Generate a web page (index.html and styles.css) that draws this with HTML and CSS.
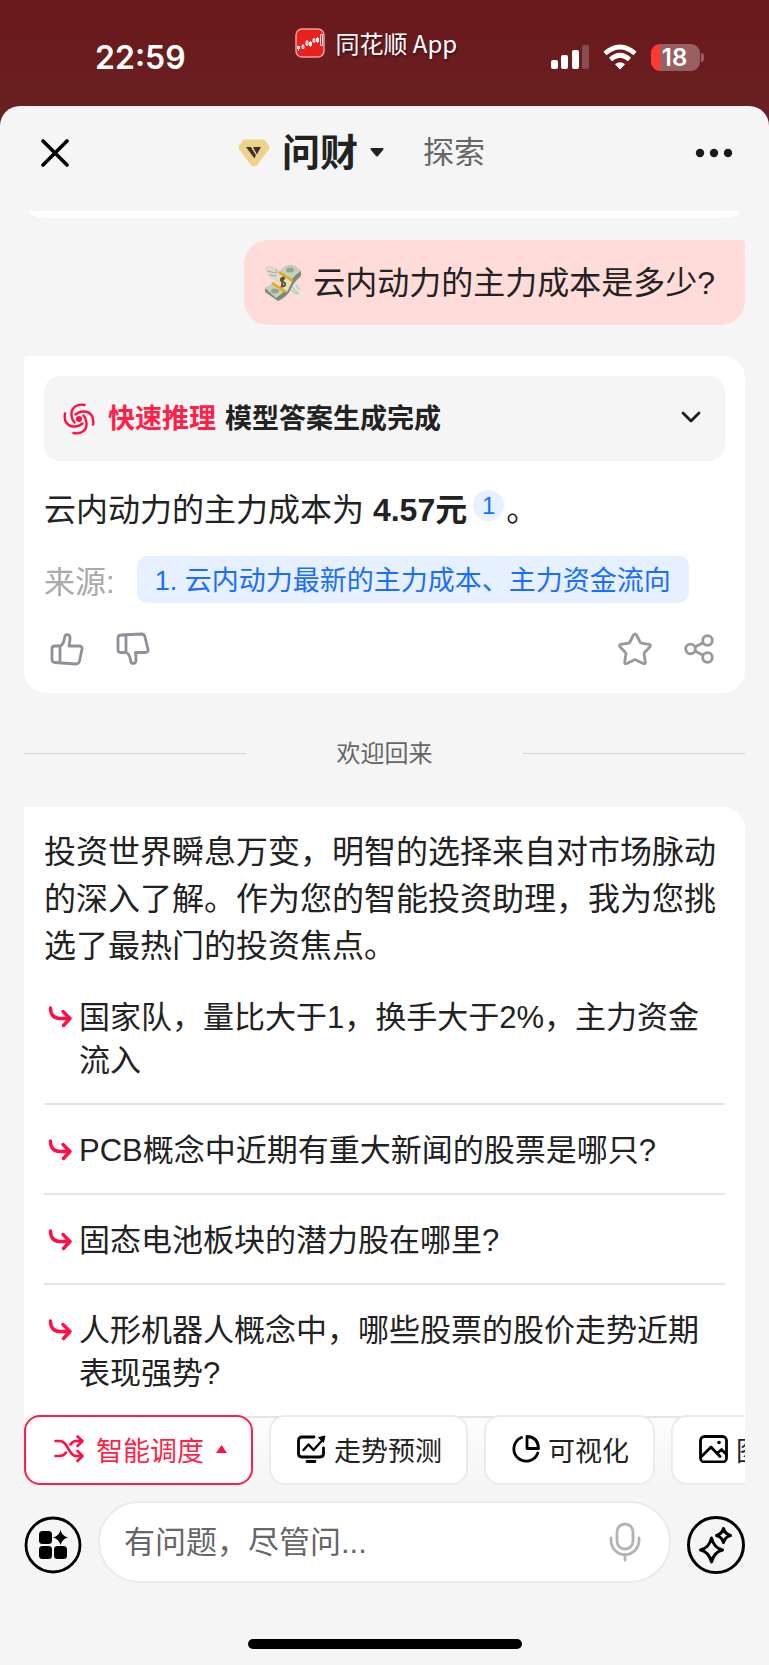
FILE: index.html
```html
<!DOCTYPE html>
<html lang="zh-CN">
<head>
<meta charset="utf-8">
<meta name="viewport" content="width=device-width, initial-scale=1">
<title>问财</title>
<link rel="stylesheet" href="styles.css">
</head>
<body>
<div class="status">
  <time class="clock">22:59</time>
  <div class="source-app">
    <svg class="app-icon" width="30" height="30" viewBox="0 0 30 30" aria-hidden="true">
      <rect x="1" y="1" width="28" height="28" rx="6" fill="#e8211f" stroke="#f59a98" stroke-width="1.5"/>
      <path d="M3.500 18v5M8 16v5M12 12v6M15.500 13v6M19 10v5M22.500 9v6" stroke="#fff" stroke-width=".8"/>
      <path d="M2 18h3v3H2zM14 14h3v4h-3zM21 10h3v4h-3z" fill="#fff"/>
      <path d="M7 17.500h2v3H7zM11 13h2v4h-2zM18 11h2v3h-2zM25.500 6.500h2v11h-2z" fill="none" stroke="#fff" stroke-width=".9"/>
    </svg>
    <span>同花顺 App</span>
  </div>
  <div class="signals">
    <svg width="38" height="26" viewBox="0 0 38 26" aria-hidden="true" fill="#fff">
      <rect x="0" y="16" width="7" height="9" rx="2"/><rect x="10" y="11" width="7" height="14" rx="2"/>
      <rect x="21" y="6" width="7" height="19" rx="2"/><rect x="31" y="1" width="7" height="24" rx="2" opacity=".22"/>
    </svg>
    <svg width="34" height="26" viewBox="0 0 34 26" aria-hidden="true" fill="none" stroke="#fff" stroke-width="4.600">
      <path d="M2 9.500Q17-3.500 32 9.500"/><path d="M7.500 15.500Q17 7 26.500 15.500"/>
      <path d="M17 25.500l-5-5.300q5-4 10 0z" fill="#fff" stroke="none"/>
    </svg>
    <div class="battery"><span class="battery-level">18</span></div>
  </div>
</div>

<div class="sheet">
  <header class="header">
    <button class="icon-button" aria-label="关闭">
      <svg width="28" height="28" viewBox="0 0 28 28"><path d="M2 2l24 24M26 2L2 26" stroke="#000" stroke-width="3.600" stroke-linecap="round"/></svg>
    </button>
    <nav class="tabs">
      <button class="tab tab-active">
        <svg width="32" height="28" viewBox="0 0 32 28" aria-hidden="true">
          <path d="M7 .5h18q1.500 0 2.400 1.200l3.600 5q1 1.600 0 3.200L19.500 25.500q-1.200 1.700-2.500 1.700h-2q-1.300 0-2.500-1.700L1 9.900q-1-1.600 0-3.200l3.600-5Q5.500.5 7 .5z" fill="#efd28a"/>
          <path d="M8 8h5l5 8-1.500 3.500zM15 8h8l-4.200 7.500z" fill="#3b3330"/>
          <path d="M13.500 8l5 8" stroke="#efd28a" stroke-width="1"/>
        </svg>
        <span>问财</span>
        <svg width="14" height="9" viewBox="0 0 14 9" aria-hidden="true"><path d="M1.500 1h11L7 7.500z" fill="#222" stroke="#222" stroke-width="2" stroke-linejoin="round"/></svg>
      </button>
      <button class="tab">探索</button>
    </nav>
    <button class="icon-button" aria-label="更多">
      <svg width="38" height="10" viewBox="0 0 38 10" fill="#1a1a1a"><circle cx="5" cy="5" r="4.200"/><circle cx="19" cy="5" r="4.200"/><circle cx="33" cy="5" r="4.200"/></svg>
    </button>
  </header>

  <main class="chat">
    <div class="previous"></div>
    <div class="question">
      <svg width="38" height="38" viewBox="0 0 38 38" role="img" aria-label="钱">
        <path d="M1 3q6-3 11 1l5 4-5 8q-6 0-7-4-3-2-2-4-3-2-2-5z" fill="#dcd9d2"/>
        <path d="M3 7l9 2M5 11l8 1M12 5l1 4" stroke="#aaa79f" stroke-width="1"/>
        <path d="M24 22l6-4q7 2 7 6l-1 10q-3 0-4-3-4 0-5-4-3-1-3-5z" fill="#e6e3dd"/>
        <path d="M28 23l7 7M27 26l6 4M32 21l3 5" stroke="#b4b1a9" stroke-width="1"/>
        <path d="M25 1q7 0 12 6v5Q29 19 27 25 23 33 14 37L1 28v-4q9-3 12-10Q17 3 25 1z" fill="#7f8b78"/>
        <path d="M25 1q7 0 12 6-8 5-12 13T12 34L1 24q9-3 13-12 4-9 11-11z" fill="#c9d0ba"/>
        <ellipse cx="26" cy="6" rx="4" ry="2.500" fill="#93a58b"/><ellipse cx="11" cy="27" rx="4" ry="2.500" fill="#93a58b"/>
        <path d="M14 10l14 8-5 10-14-8z" fill="#e6dfbf"/>
        <path d="M15 8l14 9M8 19l14 9" stroke="#eaa51c" stroke-width="2.400"/>
        <path d="M21 15q-3-2-4 0t2 3 2 3-4 1M19.500 12.500l-2 11" fill="none" stroke="#5d4b26" stroke-width="1.800"/>
      </svg>
      <span>云内动力的主力成本是多少?</span>
    </div>

    <section class="card answer">
      <button class="reasoning">
        <svg class="swirl" width="32" height="32" viewBox="-16 -16 32 32" fill="none" stroke="#ff0f45" stroke-width="2.400" stroke-linecap="round" aria-hidden="true">
          <circle r="3" fill="#ff0f45" stroke="none"/>
          <path d="M5.500-14C-2-15.500-8-11.500-7.500-4q.2 4.500 3 7.500"/>
          <path transform="rotate(90)" d="M5.500-14C-2-15.500-8-11.500-7.500-4q.2 4.500 3 7.500"/>
          <path transform="rotate(180)" d="M5.500-14C-2-15.500-8-11.500-7.500-4q.2 4.500 3 7.500"/>
          <path transform="rotate(270)" d="M5.500-14C-2-15.500-8-11.500-7.500-4q.2 4.500 3 7.500"/>
        </svg>
        <strong class="reasoning-mode">快速推理</strong>
        <strong>模型答案生成完成</strong>
        <svg class="chevron" width="20" height="12" viewBox="0 0 20 12" aria-hidden="true"><path d="M2 2l8 8 8-8" fill="none" stroke="#1a1a1a" stroke-width="2.800" stroke-linecap="round" stroke-linejoin="round"/></svg>
      </button>
      <p class="answer-text">云内动力的主力成本为 <strong>4.57元</strong><a class="cite" href="#source">1</a>。</p>
      <div class="sources">
        <span class="sources-label">来源:</span>
        <a class="source" id="source" href="#source">1. 云内动力最新的主力成本、主力资金流向</a>
      </div>
      <div class="actions">
        <button class="icon-button" aria-label="赞"><svg width="34" height="34" viewBox="0 0 34 34" fill="none" stroke="#8e9199" stroke-width="2.800" stroke-linejoin="round"><path d="M10 14v17M4.500 14H10c3-1 4-4 4.600-8.500C15 1.500 20 1.500 20 6c0 3-.5 5-1 8h10q3.500 0 3 3l-2.500 12q-.7 3-3.500 3L5 30.500q-3 0-3-3V17q0-3 2.500-3z"/></svg></button>
        <button class="icon-button" aria-label="踩"><svg width="34" height="34" viewBox="0 0 34 34" fill="none" stroke="#8e9199" stroke-width="2.800" stroke-linejoin="round"><path d="M10 3v17M4.500 20.500H10c3 1 4 4 4.600 8 .4 4 5.400 4 5.400-.5 0-3 0-4.500-.5-7.500H29q3.500 0 3-3L29 5q-.7-3-3.500-3L5 3Q2 3 2 6v11.500q0 3 2.500 3z"/></svg></button>
        <button class="icon-button action-right" aria-label="收藏"><svg width="34" height="34" viewBox="0 0 34 34" fill="none" stroke="#999" stroke-width="2.800" stroke-linejoin="round"><path d="M15.500 3Q17 .8 18.500 3l3.500 7q.4 1 1.500 1.200l7.500 1.200q2.500.6.800 2.600l-5 5.300q-.9.900-.7 2l1.200 7.700q.2 2.600-2.200 1.500l-7-3.600q-1.100-.5-2.200 0l-7 3.600q-2.400 1.100-2.200-1.500l1.200-7.700q.2-1.100-.7-2L2.200 15q-1.700-2 .8-2.600l7.500-1.200q1.100-.2 1.500-1.200z"/></svg></button>
        <button class="icon-button" aria-label="分享"><svg width="30" height="30" viewBox="0 0 30 30" fill="none" stroke="#999" stroke-width="2.800"><circle cx="6.500" cy="15" r="4.800"/><circle cx="23.500" cy="6.500" r="4.800"/><circle cx="23.500" cy="23.500" r="4.800"/><path d="M11 13l8.500-4.500M11 17l8.500 4.500"/></svg></button>
      </div>
    </section>

    <div class="divider"><span>欢迎回来</span></div>

    <section class="card welcome">
      <p class="intro">投资世界瞬息万变，明智的选择来自对市场脉动的深入了解。作为您的智能投资助理，我为您挑选了最热门的投资焦点。</p>
      <ul class="topics">
        <li><a class="topic" href="#t1"><svg class="arrow" width="24" height="22" viewBox="0 0 24 22"><path d="M2.500 2q0 10 9 10.500H22M15 5.500l7 7-6.500 7" /></svg><span>国家队，量比大于1，换手大于2%，主力资金流入</span></a></li>
        <li><a class="topic" href="#t2"><svg class="arrow" width="24" height="22" viewBox="0 0 24 22"><path d="M2.500 2q0 10 9 10.500H22M15 5.500l7 7-6.500 7" /></svg><span>PCB概念中近期有重大新闻的股票是哪只?</span></a></li>
        <li><a class="topic" href="#t3"><svg class="arrow" width="24" height="22" viewBox="0 0 24 22"><path d="M2.500 2q0 10 9 10.500H22M15 5.500l7 7-6.500 7" /></svg><span>固态电池板块的潜力股在哪里?</span></a></li>
        <li><a class="topic" href="#t4"><svg class="arrow" width="24" height="22" viewBox="0 0 24 22"><path d="M2.500 2q0 10 9 10.500H22M15 5.500l7 7-6.500 7" /></svg><span>人形机器人概念中，哪些股票的股价走势近期表现强势?</span></a></li>
      </ul>
    </section>
  </main>

  <footer class="dock">
    <div class="chips">
      <button class="chip chip-active">
        <svg width="30" height="28" viewBox="0 0 30 28" fill="none" stroke="#ff0f45" stroke-width="2.600" stroke-linecap="round" stroke-linejoin="round" aria-hidden="true"><path d="M1.500 6H6c8 0 8.500 15 16 15h6M1.500 21H6q3.500 0 6-3.500M16.500 9.500Q19 6 22 6h6M23.500 1.500L28.500 6l-5 5M23.500 16l5 5-5 5"/></svg>
        <span>智能调度</span>
        <svg class="caret" width="11" height="8" viewBox="0 0 11 8" aria-hidden="true"><path d="M5.500 0L11 8H0z" fill="#ff0f45"/></svg>
      </button>
      <button class="chip">
        <svg width="29" height="28" viewBox="0 0 29 28" fill="none" stroke="#000" stroke-width="2.800" stroke-linecap="round" stroke-linejoin="round" aria-hidden="true"><path d="M17 2H5Q1.500 2 1.500 5.500v13Q1.500 22 5 22h18q3.500 0 3.500-3.500V13M10 26.500h8"/><path d="M6.500 15l5-5.500 5 5.500L26 4.500" stroke-width="2.400"/><path d="M22 2.500l6-1.500-1.500 6z" fill="#000" stroke-width="1"/></svg>
        <span>走势预测</span>
      </button>
      <button class="chip">
        <svg width="28" height="28" viewBox="0 0 28 28" fill="none" stroke="#000" stroke-width="2.800" stroke-linecap="round" stroke-linejoin="round" aria-hidden="true"><path d="M9.500 2.500A12.300 12.300 0 1 0 25.800 18"/><path d="M15 1.500q11 .5 11.500 12H15z"/></svg>
        <span>可视化</span>
      </button>
      <button class="chip">
        <svg width="29" height="28" viewBox="0 0 29 28" fill="none" stroke="#000" stroke-width="2.800" stroke-linecap="round" stroke-linejoin="round" aria-hidden="true"><rect x="1.500" y="1.500" width="26" height="25.500" rx="4"/><path d="M2 22l10-10 9 9.500M18 18.500l4.500-4 5 5"/><circle cx="20" cy="7.500" r="1.800" fill="#000" stroke="none"/></svg>
        <span>图片</span>
      </button>
    </div>
    <div class="composer">
      <button class="round-button" aria-label="应用">
        <svg width="58" height="58" viewBox="0 0 58 58"><circle cx="29" cy="29" r="27" fill="none" stroke="#000" stroke-width="2.800"/><rect x="15" y="15" width="13" height="13" rx="3.500"/><rect x="15" y="30" width="13" height="13" rx="3.500"/><rect x="30" y="30" width="13" height="13" rx="3.500"/><path d="M36.500 14q1.500 6 7.500 7.500-6 1.500-7.500 7.500-1.500-6-7.500-7.500 6-1.500 7.500-7.500z"/></svg>
      </button>
      <div class="field">
        <input class="field-input" type="text" placeholder="有问题，尽管问..." aria-label="提问">
        <button class="icon-button" aria-label="语音"><svg width="32" height="40" viewBox="0 0 32 40" fill="none" stroke="#b3b3b3" stroke-width="2.800" stroke-linecap="round"><rect x="8" y="2" width="16" height="25" rx="8"/><path d="M2 16v2.500a14 14 0 0 0 28 0V16M16 32.500V38"/></svg></button>
      </div>
      <button class="round-button" aria-label="灵感">
        <svg width="58" height="58" viewBox="0 0 58 58" fill="none" stroke="#000" stroke-width="3" stroke-linejoin="round"><circle cx="29" cy="29" r="27.500"/><path d="M24.500 22q2.500 10 11 12-8.500 2-11 12-2.500-10-11-12 8.500-2 11-12zM36.500 12.500q1.500 5.500 7 7-5.500 1.500-7 7-1.500-5.500-7-7 5.500-1.500 7-7z"/></svg>
      </button>
    </div>
    <div class="home-indicator"></div>
  </footer>
</div>
</body>
</html>
```

FILE: styles.css
```css
* {
  box-sizing: border-box;
}

body {
  margin: 0;
  min-height: 100vh;
  display: flex;
  flex-direction: column;
  background: linear-gradient(#6a181b, #6a2022 106px);
  color: #222;
  font-family: "Liberation Sans", "Noto Sans CJK SC", sans-serif;
}

button,
input {
  margin: 0;
  padding: 0;
  border: 0;
  background: none;
  color: inherit;
  font: inherit;
}

svg {
  display: block;
  flex: none;
}

a {
  color: inherit;
  text-decoration: none;
}

.icon-button {
  display: flex;
  flex: none;
}

.status {
  height: 106px;
  padding: 0 69px 0 95px;
  display: flex;
  justify-content: space-between;
  align-items: center;
  color: #fff;
}

.clock {
  padding-top: 10px;
  font: 600 32px/40px Inter, sans-serif;
}

.source-app {
  display: flex;
  align-items: center;
  gap: 10px;
  padding-left: 16px;
  padding-bottom: 20px;
  font: 24px/30px "Noto Sans CJK SC", sans-serif;
  text-shadow: 1px 2px 2px rgba(0, 0, 0, 0.4);
}

.signals {
  display: flex;
  align-items: center;
  gap: 14px;
  padding-top: 8px;
}

.battery {
  position: relative;
  width: 49px;
  height: 27px;
  border-radius: 9px;
  background: linear-gradient(90deg, #ff3b30 9px, #986062 9px);
}

.battery::after {
  content: "";
  position: absolute;
  top: 9px;
  right: -4px;
  width: 3px;
  height: 9px;
  border-radius: 0 3px 3px 0;
  background: #986062;
}

.battery-level {
  display: block;
  padding-right: 2px;
  text-align: center;
  font: 600 24px/27px Inter, sans-serif;
}

.sheet {
  flex: 1;
  display: flex;
  flex-direction: column;
  border-radius: 20px 20px 0 0;
  background: #f5f5f5;
}

.header {
  height: 105px;
  padding: 0 36px 12px 41px;
  display: flex;
  align-items: center;
  justify-content: space-between;
}

.tabs {
  display: flex;
  align-items: center;
  gap: 39px;
  padding-right: 41px;
}

.tab {
  color: #666;
  font-size: 31px;
  line-height: 48px;
}

.tab-active {
  display: flex;
  align-items: center;
  gap: 12px;
  color: #222;
  font-size: 38px;
  font-weight: 700;
}

.chat {
  padding: 0 24px;
  display: flex;
  flex-direction: column;
}

.previous {
  height: 7px;
  margin: 0 5px 22px;
  border-radius: 0 0 18px 18px / 0 0 7px 7px;
  background: #fff;
}

.question {
  align-self: flex-end;
  min-height: 85px;
  padding: 18px 30px 18px 20px;
  display: flex;
  align-items: center;
  gap: 11px;
  border-radius: 24px 4px 24px 24px;
  background: #ffdcda;
  font-size: 32px;
  line-height: 48px;
}

.card {
  background: #fff;
}

.answer {
  margin-top: 31px;
  padding: 20px 20px 27px;
  border-radius: 4px 22px 22px 22px;
}

.reasoning {
  width: 100%;
  height: 85px;
  padding: 0 24px 4px 19px;
  display: flex;
  align-items: center;
  gap: 9px;
  border-radius: 16px;
  background: #f5f5f5;
  font-size: 27px;
}

.swirl {
  margin-top: 4px;
}

.reasoning-mode {
  padding-left: 4px;
  color: #ff1f48;
}

.chevron {
  margin-left: auto;
}

.answer-text {
  margin: 25px 0 0;
  font-size: 32px;
  line-height: 48px;
}

.cite {
  display: inline-block;
  width: 31px;
  height: 31px;
  margin: 0 2px 0 6px;
  border-radius: 50%;
  background: #e6f0ff;
  color: #1a6dff;
  font-size: 24px;
  line-height: 31px;
  text-align: center;
  vertical-align: 7px;
}

.sources {
  margin-top: 22px;
  display: flex;
  align-items: center;
  gap: 22px;
}

.sources-label {
  color: #aaa;
  font-size: 31px;
}

.source {
  padding: 3px 18px 0;
  border-radius: 10px;
  background: #e6f0ff;
  color: #1a6dff;
  font-size: 27px;
  line-height: 44px;
}

.actions {
  margin-top: 29px;
  padding: 0 11px 0 6px;
  display: flex;
  align-items: center;
  gap: 32px;
}

.action-right {
  margin-left: auto;
}

.divider {
  margin: 44px 0 38px;
  display: flex;
  align-items: center;
  gap: 90px;
  color: #666;
  font-size: 24px;
  line-height: 30px;
}

.divider span {
  padding-top: 2px;
}

.divider::before,
.divider::after {
  content: "";
  flex: 1;
  height: 1px;
  background: #d4d4d4;
}

.welcome {
  padding: 22px 20px 0;
  border-radius: 4px 22px 0 0;
}

.intro {
  margin: 0 0 2px;
  font-size: 32px;
  line-height: 47px;
}

.topics {
  margin: 0;
  padding: 0;
  list-style: none;
}

.topic {
  padding: 24px 0 21px 4px;
  display: flex;
  align-items: flex-start;
  gap: 7px;
  border-bottom: 2px solid #e5e5e5;
  font-size: 31px;
  line-height: 43px;
}

.arrow {
  margin-top: 10px;
  fill: none;
  stroke: #ff0f45;
  stroke-width: 3.4;
  stroke-linecap: round;
  stroke-linejoin: round;
}

.dock {
  margin-top: -3px;
}

.chips {
  position: relative;
  margin: 0 24px;
  display: flex;
  gap: 16px;
  overflow: hidden;
  background: linear-gradient(transparent 3px, #fdfdfd 3px, #f5f5f5);
}

.chip {
  height: 70px;
  padding: 0 24px 2px 26px;
  flex: none;
  display: flex;
  align-items: center;
  gap: 8px;
  border: 2px solid #ebebeb;
  border-radius: 16px;
  background: #fff;
  font-size: 27px;
}

.chip-active {
  padding: 0 24px 2px 28px;
  gap: 12px;
  border-color: #ff1f48;
  color: #ff1f48;
}

.composer {
  margin: 16px 24px 0;
  display: flex;
  align-items: center;
  gap: 16px;
}

.round-button {
  display: flex;
  flex: none;
  padding-top: 6px;
}

.field {
  flex: 1;
  height: 82px;
  padding: 0 28px 0 24px;
  display: flex;
  align-items: center;
  border: 2px solid #ebebeb;
  border-radius: 41px;
  background: #fff;
}

.field-input {
  flex: 1;
  min-width: 0;
  height: 48px;
  padding-top: 2px;
  font-size: 31px;
  outline: none;
}

.field-input::placeholder {
  color: #666;
  opacity: 1;
}

.home-indicator {
  width: 274px;
  height: 10px;
  margin: 56px auto 16px;
  border-radius: 5px;
  background: #000;
}
```
